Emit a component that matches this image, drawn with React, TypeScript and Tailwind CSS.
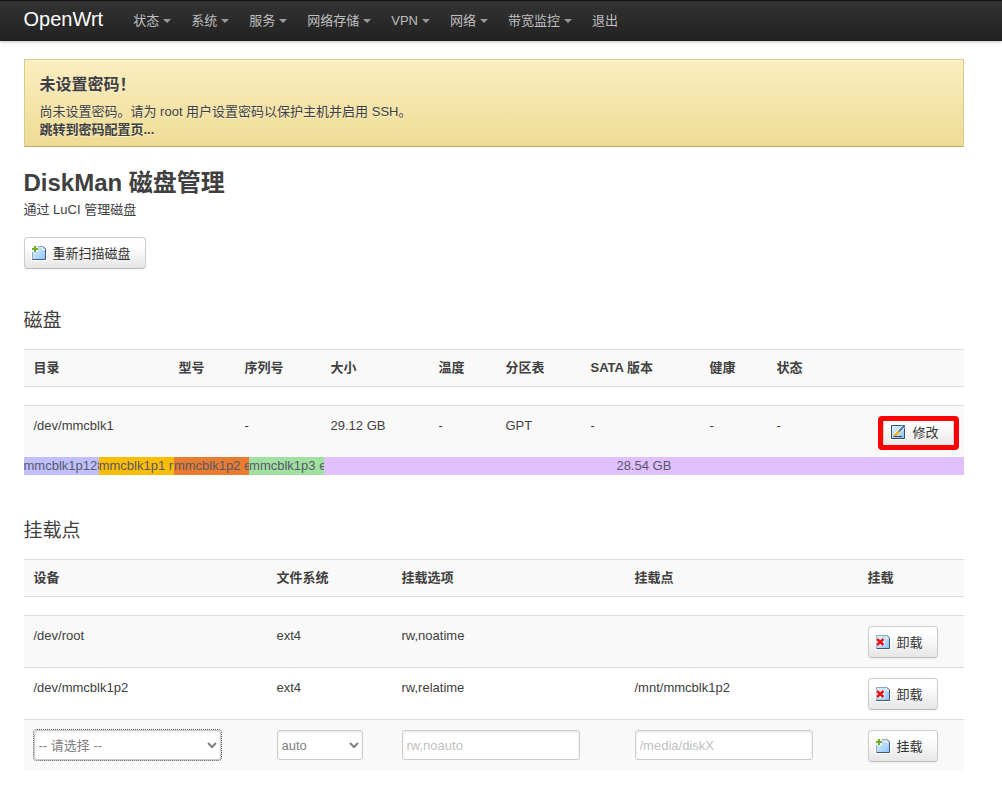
import React from "react";

type IconKind = "add" | "edit" | "remove";

function PageIcon({ kind }: { kind: IconKind }) {
  return (
    <svg viewBox="0 0 16 16" className="h-4 w-4 shrink-0" aria-hidden="true">
      <defs>
        <linearGradient id={`page-${kind}`} x1="0" y1="0" x2="1" y2="1">
          <stop offset="0" stopColor="#e6f3fd" />
          <stop offset="1" stopColor="#8cc4fa" />
        </linearGradient>
      </defs>
      <path d="M0 0H13L16 3V16H0Z" fill="#fff" />
      <path d="M1.5 1.5H12L14.5 4V14.5H1.5Z" fill={`url(#page-${kind})`} />
      <path d="M1.5 14.5V1.5H12" fill="none" stroke="#8fa9c4" />
      <path d="M12 1.5L14.5 4V14.5H1.5" fill="none" stroke="#3f5873" />
      <path d="M11.5 2V4.5H14" fill="none" stroke="#fff" />
      {kind === "add" && (
        <>
          <path d="M0 0H7V7H0Z" fill="#fff" opacity="0.85" />
          <path d="M4 1V7M1 4H7" stroke="#6fae22" strokeWidth="2" />
        </>
      )}
      {kind === "remove" && (
        <>
          <path d="M1 4H10V12H1Z" fill="#fff" opacity="0.6" />
          <path d="M2 5L8.5 11M8.5 5L2 11" stroke="#e01515" strokeWidth="2.4" />
        </>
      )}
      {kind === "edit" && (
        <>
          <path d="M1.5 1.5H14.5V14.5H1.5Z" fill="url(#page-edit)" stroke="#2f4f70" />
          <path d="M5 11.5L13.5 2.5" stroke="#fff" strokeWidth="4" />
          <path d="M8 8.5L14 2" stroke="#3f78b4" strokeWidth="2" />
          <path d="M4.5 12L9 7.5" stroke="#f0b21a" strokeWidth="2.6" />
          <path d="M3.5 12.5H12" stroke="#33475c" />
        </>
      )}
    </svg>
  );
}

function ActionButton({ kind, children }: { kind: IconKind; children: React.ReactNode }) {
  return (
    <button
      type="button"
      className="inline-flex h-8 items-center gap-1.5 rounded border border-[#ccc] border-b-[#bbb] bg-linear-to-b from-white from-25% to-[#e6e6e6] pr-3.5 pl-1.5 align-top leading-[18px] whitespace-nowrap text-[#333] shadow-[0_1px_2px_rgba(0,0,0,0.05)]"
    >
      <PageIcon kind={kind} />
      <span className="pt-0.5">{children}</span>
    </button>
  );
}

const menu = ["状态", "系统", "服务", "网络存储", "VPN", "网络", "带宽监控"];

const diskColumns = [
  { label: "目录", width: "w-[145px]" },
  { label: "型号", width: "w-[66px]" },
  { label: "序列号", width: "w-[86px]" },
  { label: "大小", width: "w-[108px]" },
  { label: "温度", width: "w-[67px]" },
  { label: "分区表", width: "w-[85px]" },
  { label: "SATA 版本", width: "w-[119px]" },
  { label: "健康", width: "w-[67px]" },
  { label: "状态", width: "w-[78px]" },
  { label: "", width: "w-[119px]" },
];
const disk = ["/dev/mmcblk1", "", "-", "29.12 GB", "-", "GPT", "-", "-", "-"];

const partitions = [
  { label: "mmcblk1p128", style: "w-[8%] bg-[#c0c0ff]" },
  { label: "mmcblk1p1 r", style: "w-[8%] bg-[#fbbd00]" },
  { label: "mmcblk1p2 e", style: "w-[8%] bg-[#e97c30]" },
  { label: "mmcblk1p3 e", style: "w-[8%] bg-[#a0e0a0]" },
  { label: "28.54 GB", style: "flex-1 text-center bg-[#e0c0ff]" },
];

const mountColumns = [
  { label: "设备", width: "w-[243px]" },
  { label: "文件系统", width: "w-[125px]" },
  { label: "挂载选项", width: "w-[233px]" },
  { label: "挂载点", width: "w-[233px]" },
  { label: "挂载", width: "w-[106px]" },
];
const mounts = [
  ["/dev/root", "ext4", "rw,noatime", ""],
  ["/dev/mmcblk1p2", "ext4", "rw,relatime", "/mnt/mmcblk1p2"],
];

const cell = "border-t border-[#ddd] px-2.5 pt-2.5 pb-[9px] align-top leading-5";
const field =
  "h-[30px] rounded-[3px] border border-[#ccc] bg-white align-top text-[#808080] shadow-[inset_0_1px_3px_rgba(0,0,0,0.1)] placeholder:text-[#bfbfbf]";

function HeaderRow({ columns }: { columns: { label: string; width: string }[] }) {
  return (
    <thead>
      <tr className="bg-[#f9f9f9]">
        {columns.map((c, i) => (
          <th
            key={i}
            className={`${c.width} border-y border-[#ddd] px-2.5 py-[9px] text-left font-bold whitespace-nowrap`}
          >
            {c.label}
          </th>
        ))}
      </tr>
      <tr aria-hidden="true">
        <td colSpan={columns.length} className="h-[18px]" />
      </tr>
    </thead>
  );
}

export default function App() {
  return (
    <div className="bg-white pb-5 font-['Liberation_Sans','Noto_Sans_CJK_SC',sans-serif] text-[13px] leading-[18px] text-[#404040]">
      <header className="border-t border-[#111] bg-linear-to-b from-[#333] to-[#222] pr-[15px] shadow-[0_1px_3px_rgba(0,0,0,0.25),inset_0_-1px_0_rgba(0,0,0,0.1)]">
        <div className="mx-auto flex h-10 max-w-[940px] items-center">
          <a href="#" className="pr-5 pb-1 text-xl leading-5 text-white">
            OpenWrt
          </a>
          <nav className="flex">
            {menu.map((m) => (
              <a key={m} href="#" className="flex items-center gap-1 px-2.5 text-[#bfbfbf]">
                {m}
                <span className="border-x-4 border-t-4 border-x-transparent border-t-[#999]" />
              </a>
            ))}
            <a href="#" className="px-2.5 text-[#bfbfbf]">
              退出
            </a>
          </nav>
        </div>
      </header>

      <main className="pt-[18px] pr-[15px]">
        <div className="mx-auto max-w-[940px]">
          <section className="mb-[18px] border border-[#d8cc8c] border-b-[#b8a868] bg-linear-to-b from-[#fceec1] to-[#eedc94] px-[15px] py-[7px] shadow-[inset_0_1px_0_rgba(255,255,255,0.25)] [text-shadow:0_1px_0_rgba(255,255,255,0.5)]">
            <h4 className="text-base leading-9 font-bold">未设置密码！</h4>
            <p>尚未设置密码。请为 root 用户设置密码以保护主机并启用 SSH。</p>
            <a href="#" className="block font-bold">
              跳转到密码配置页...
            </a>
          </section>

          <h2 className="text-2xl leading-9 font-bold">DiskMan 磁盘管理</h2>
          <p className="mb-[18px]">通过 LuCI 管理磁盘</p>
          <ActionButton kind="add">重新扫描磁盘</ActionButton>

          <section className="mt-[34px]">
            <h3 className="mb-2.5 text-[19px] leading-9">磁盘</h3>
            <table className="w-full table-fixed border-separate border-spacing-0">
              <HeaderRow columns={diskColumns} />
              <tbody>
                <tr className="bg-[#f9f9f9]">
                  {disk.map((v, i) => (
                    <td key={i} className={cell}>
                      {v}
                    </td>
                  ))}
                  <td className={`${cell} text-right`}>
                    <span className="relative inline-block align-top">
                      <ActionButton kind="edit">修改</ActionButton>
                      <span className="pointer-events-none absolute -inset-x-[5px] top-0 -bottom-0.5 rounded-[4px] border-[5px] border-[#f00]" />
                    </span>
                  </td>
                </tr>
              </tbody>
            </table>
            <div className="flex text-[#58586c]">
              {partitions.map((p) => (
                <div key={p.label} className={`${p.style} overflow-hidden whitespace-nowrap`}>
                  {p.label}
                </div>
              ))}
            </div>
          </section>

          <section className="mt-[38px]">
            <h3 className="mb-2.5 text-[19px] leading-9">挂载点</h3>
            <table className="w-full table-fixed border-separate border-spacing-0">
              <HeaderRow columns={mountColumns} />
              <tbody>
                {mounts.map((row) => (
                  <tr key={row[0]} className="odd:bg-[#f9f9f9]">
                    {row.map((v, i) => (
                      <td key={i} className={cell}>
                        {v}
                      </td>
                    ))}
                    <td className={cell}>
                      <ActionButton kind="remove">卸载</ActionButton>
                    </td>
                  </tr>
                ))}
                <tr className="bg-[#f9f9f9]">
                  <td className={cell}>
                    <select aria-label="设备" className={`${field} w-[187px] outline-1 outline-[#555] outline-dotted`}>
                      <option>-- 请选择 --</option>
                    </select>
                  </td>
                  <td className={cell}>
                    <select aria-label="文件系统" className={`${field} w-[86px]`}>
                      <option>auto</option>
                    </select>
                  </td>
                  <td className={cell}>
                    <input aria-label="挂载选项" placeholder="rw,noauto" className={`${field} w-[178px] px-1`} />
                  </td>
                  <td className={cell}>
                    <input aria-label="挂载点" placeholder="/media/diskX" className={`${field} w-[178px] px-1`} />
                  </td>
                  <td className={cell}>
                    <ActionButton kind="add">挂载</ActionButton>
                  </td>
                </tr>
              </tbody>
            </table>
          </section>
        </div>
      </main>
    </div>
  );
}
